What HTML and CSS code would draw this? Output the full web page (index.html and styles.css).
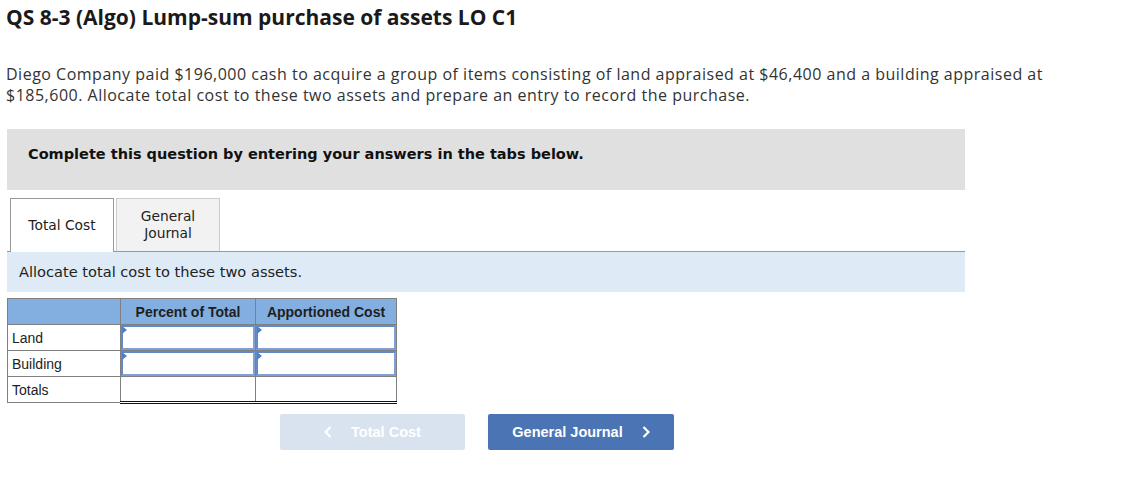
FILE: index.html
```html
<!DOCTYPE html>
<html>
<head>
<meta charset="utf-8">
<link rel="stylesheet" href="styles.css">
</head>
<body>
<div class="page">
  <h1 class="title">QS 8-3 (Algo) Lump-sum purchase of assets LO C1</h1>
  <p class="prompt">Diego Company paid $196,000 cash to acquire a group of items consisting of land appraised at $46,400 and a building appraised at $185,600. Allocate total cost to these two assets and prepare an entry to record the purchase.</p>
  <div class="notice">Complete this question by entering your answers in the tabs below.</div>
  <div class="tabs">
    <div class="tab active">Total Cost</div>
    <div class="tab">General<br>Journal</div>
  </div>
  <div class="instruction">Allocate total cost to these two assets.</div>
  <table class="grid">
    <colgroup><col class="c1"><col class="c2"><col class="c3"></colgroup>
    <tr class="head"><th></th><th>Percent of Total</th><th>Apportioned Cost</th></tr>
    <tr><td class="label">Land</td><td class="inp"><div class="box"></div></td><td class="inp"><div class="box"></div></td></tr>
    <tr><td class="label">Building</td><td class="inp"><div class="box"></div></td><td class="inp"><div class="box"></div></td></tr>
    <tr class="total"><td class="label">Totals</td><td class="tot"></td><td class="tot"></td></tr>
  </table>
  <div class="nav">
    <button class="btn prev"><svg class="chev" width="8" height="12" viewBox="0 0 8 12"><polyline points="6.5,1 1.5,6 6.5,11" fill="none" stroke="#fff" stroke-width="2.2"/></svg>Total Cost</button>
    <button class="btn next">General Journal<svg class="chev r" width="8" height="12" viewBox="0 0 8 12"><polyline points="1.5,1 6.5,6 1.5,11" fill="none" stroke="#fff" stroke-width="2.2"/></svg></button>
  </div>
</div>
</body>
</html>
```
FILE: styles.css
```css
html, body { margin: 0; padding: 0; background: #fff; }
.page { padding: 0 0 0 7px; width: 958px; }
.title {
  font-family: "Open Sans", "Lato", sans-serif;
  font-weight: 700;
  font-size: 21px;
  line-height: 24px;
  color: #1a1a1a;
  margin: 5px 0 0 -1px;
}
.prompt {
  font-family: "Open Sans", "Lato", sans-serif;
  font-size: 16px;
  letter-spacing: 0.5px;
  line-height: 21px;
  color: #333;
  margin: 35px 0 0 -1px;
  width: 1060px;
}
.notice {
  margin-top: 23px;
  background: #e0e0e0;
  height: 61px;
  box-sizing: border-box;
  padding: 17px 0 0 21px;
  font-family: "DejaVu Sans", Verdana, sans-serif;
  font-weight: 700;
  font-size: 14.5px;
  color: #111;
}
.tabs {
  display: flex;
  gap: 2px;
  margin-top: 8px;
  padding-left: 3px;
  border-bottom: 1px solid #999;
  height: 53px;
  align-items: flex-end;
}
.tab {
  width: 104px;
  height: 53px;
  box-sizing: border-box;
  display: flex;
  align-items: center;
  justify-content: center;
  text-align: center;
  font-family: "DejaVu Sans", Tahoma, sans-serif;
  font-size: 13.8px;
  line-height: 17px;
  color: #222;
  background: #f2f2f2;
  border: 1px solid #ccc;
  border-bottom: none;
}
.tab.active {
  background: #fff;
  border: 1px solid #999;
  border-bottom: none;
  height: 54px;
  margin-bottom: -1px;
}
.instruction {
  background: #deebf6;
  height: 40px;
  box-sizing: border-box;
  padding: 11px 0 0 12px;
  font-family: "DejaVu Sans", Tahoma, sans-serif;
  font-size: 14.6px;
  color: #222;
}
.grid {
  margin-top: 6px;
  border-collapse: collapse;
  font-family: "Liberation Sans", Arial, sans-serif;
  font-size: 14px;
  color: #222;
  table-layout: fixed;
  width: 389px;
}
.c1 { width: 113px; }
.c2 { width: 135px; }
.c3 { width: 141px; }
.grid th, .grid td {
  border: 1px solid #808080;
  height: 26px;
  padding: 0;
  box-sizing: border-box;
}
.grid .head th {
  background: #82aee0;
  font-weight: 700;
  text-align: center;
  color: #1e1e1e;
}
.grid .label { padding-left: 4px; text-align: left; }
.box {
  height: 25px;
  box-sizing: border-box;
  border: 2px solid #6289c8;
  border-right-color: #7fa0d6;
  border-bottom-color: #7fa0d6;
  background: #fff;
  position: relative;
}
.box::before {
  content: "";
  position: absolute;
  left: -1px; top: -1px;
  border-left: 5px solid #4f7fc4;
  border-top: 4px solid transparent;
  border-bottom: 4px solid transparent;
}
.grid .total .tot {
  border-top: 1px solid #111;
  border-bottom: 3px double #111;
}
.nav {
  display: flex;
  gap: 23px;
  margin: 10px 0 0 273px;
}
.btn {
  width: 185px;
  height: 36px;
  border: none;
  border-radius: 2px;
  font-family: "Liberation Sans", Arial, sans-serif;
  font-weight: 700;
  font-size: 14.5px;
  color: #fff;
  display: flex;
  align-items: center;
  justify-content: center;
  padding: 0;
}
.prev { background: #d9e3ef; }
.next { background: #4a74b3; width: 186px; }
.chev { display: block; margin-right: 19px; }
.chev.r { margin-right: 0; margin-left: 19px; }
```
